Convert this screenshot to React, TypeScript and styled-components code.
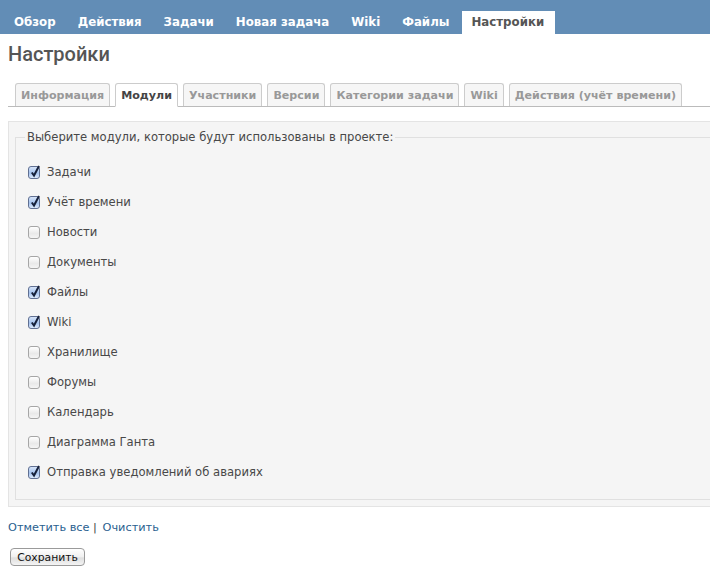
import { createGlobalStyle } from "styled-components";
import styled from "styled-components";

const GlobalStyle = createGlobalStyle`
  html, body {
    margin: 0;
    padding: 0;
    background: #fff;
    overflow: hidden;
  }
  body {
    font-family: "DejaVu Sans", Verdana, sans-serif;
    font-size: 11.6px;
    color: #484848;
  }
`;

const Page = styled.div`
  width: 710px;
  height: 585px;
  overflow: hidden;
`;

const MainMenu = styled.nav`
  display: flex;
  align-items: flex-end;
  height: 34px;
  padding-left: 3px;
  background: #628db6;
`;

const MenuItem = styled.a<{ $active?: boolean }>`
  display: block;
  height: 23px;
  margin-left: ${({ $active }) => ($active ? "2px" : "0")};
  padding: 0 11px 0 ${({ $active }) => ($active ? "9px" : "11px")};
  font-size: 11.8px;
  font-weight: bold;
  line-height: 23px;
  color: ${({ $active }) => ($active ? "#555" : "#fff")};
  background: ${({ $active }) => ($active ? "#fff" : "transparent")};
`;

const Content = styled.main`
  padding: 0 0 0 8px;
`;

const Title = styled.h2`
  margin: 0;
  padding-top: 9px;
  height: 40px;
  box-sizing: border-box;
  font-family: Roboto, "Open Sans", sans-serif;
  font-size: 20px;
  font-weight: 500;
  line-height: 22px;
  color: #555;
`;

const Tabs = styled.div`
  display: flex;
  gap: 5px;
  height: 23px;
  margin-top: 9px;
  padding-left: 7px;
  border-bottom: 1px solid #bbb;
`;

const Tab = styled.a<{ $active?: boolean }>`
  display: block;
  box-sizing: border-box;
  height: ${({ $active }) => ($active ? "24px" : "23px")};
  padding: 0 5px;
  border: 1px solid #ccc;
  border-bottom: ${({ $active }) => ($active ? "1px solid #fff" : "none")};
  border-radius: 3px 3px 0 0;
  font-size: 11.1px;
  font-weight: bold;
  line-height: 23px;
  white-space: nowrap;
  color: ${({ $active }) => ($active ? "#444" : "#999")};
  background: ${({ $active }) => ($active ? "#fff" : "#f6f6f6")};
`;

const Box = styled.div`
  box-sizing: border-box;
  width: 720px;
  height: 386px;
  margin-top: 14px;
  padding: 8px 6px 6px;
  border: 1px solid #e4e4e4;
  background: #f5f5f5;
`;

const Fieldset = styled.fieldset`
  box-sizing: border-box;
  height: 370px;
  margin: 0;
  padding: 13px 0 0 12px;
  border: 1px solid #e0e0e0;
`;

const Legend = styled.legend`
  margin-left: -3px;
  padding: 0 2px;
  font-size: 11.6px;
  line-height: 14px;
  color: #484848;
`;

const Row = styled.label`
  display: flex;
  align-items: center;
  gap: 7px;
  height: 30px;
  font-size: 11.6px;
  color: #484848;
`;

const Check = styled.span<{ $checked?: boolean }>`
  position: relative;
  flex: none;
  box-sizing: border-box;
  width: 12px;
  height: 13px;
  border: 1px solid ${({ $checked }) => ($checked ? "#5f6f92" : "#a6a6a6")};
  border-radius: 3px;
  background: ${({ $checked }) =>
    $checked
      ? "linear-gradient(#d6e4f8, #a4c2ee 55%, #dde9fb)"
      : "linear-gradient(#fff, #e9e9e9 60%, #f4f4f4)"};
`;

const Tick = styled.svg`
  position: absolute;
  left: 0;
  top: -3px;
  width: 13px;
  height: 14px;
`;

const Actions = styled.p`
  margin: 14px 0 0;
  font-size: 11.3px;
  line-height: 14px;
  color: #444;
`;

const ActionLink = styled.a<{ $last?: boolean }>`
  margin-left: ${({ $last }) => ($last ? "2px" : "0")};
  color: #2a5f8f;
`;

const SaveButton = styled.button`
  display: block;
  box-sizing: border-box;
  width: 75px;
  height: 18px;
  margin: 13px 0 0 2px;
  padding: 0;
  border: 1px solid #9a9a9a;
  border-radius: 4px;
  font-family: "DejaVu Sans", Verdana, sans-serif;
  font-size: 10.8px;
  line-height: 15px;
  color: #111;
  background: linear-gradient(#fff, #f0f0f0 50%, #dedede 55%, #f4f4f4);
`;

const menu = ["Обзор", "Действия", "Задачи", "Новая задача", "Wiki", "Файлы", "Настройки"];
const tabs = ["Информация", "Модули", "Участники", "Версии", "Категории задачи", "Wiki", "Действия (учёт времени)"];
const modules: [string, boolean][] = [
  ["Задачи", true],
  ["Учёт времени", true],
  ["Новости", false],
  ["Документы", false],
  ["Файлы", true],
  ["Wiki", true],
  ["Хранилище", false],
  ["Форумы", false],
  ["Календарь", false],
  ["Диаграмма Ганта", false],
  ["Отправка уведомлений об авариях", true],
];

const App = () => {
  return (
    <Page>
      <GlobalStyle />
      <MainMenu>
        {menu.map((item) => (
          <MenuItem key={item} $active={item === "Настройки"}>
            {item}
          </MenuItem>
        ))}
      </MainMenu>
      <Content>
        <Title>Настройки</Title>
        <Tabs>
          {tabs.map((tab) => (
            <Tab key={tab} $active={tab === "Модули"}>
              {tab}
            </Tab>
          ))}
        </Tabs>
        <Box>
          <Fieldset>
            <Legend>Выберите модули, которые будут использованы в проекте:</Legend>
            {modules.map(([name, checked]) => (
              <Row key={name}>
                <Check $checked={checked}>
                  {checked && (
                    <Tick viewBox="0 0 13 14">
                      <path d="M2.8 8.5 L5 11.5 L10 2" fill="none" stroke="#16203a" strokeWidth="2" />
                    </Tick>
                  )}
                </Check>
                {name}
              </Row>
            ))}
          </Fieldset>
        </Box>
        <Actions>
          <ActionLink>Отметить все</ActionLink> | <ActionLink $last>Очистить</ActionLink>
        </Actions>
        <SaveButton>Сохранить</SaveButton>
      </Content>
    </Page>
  );
};

export default App;
